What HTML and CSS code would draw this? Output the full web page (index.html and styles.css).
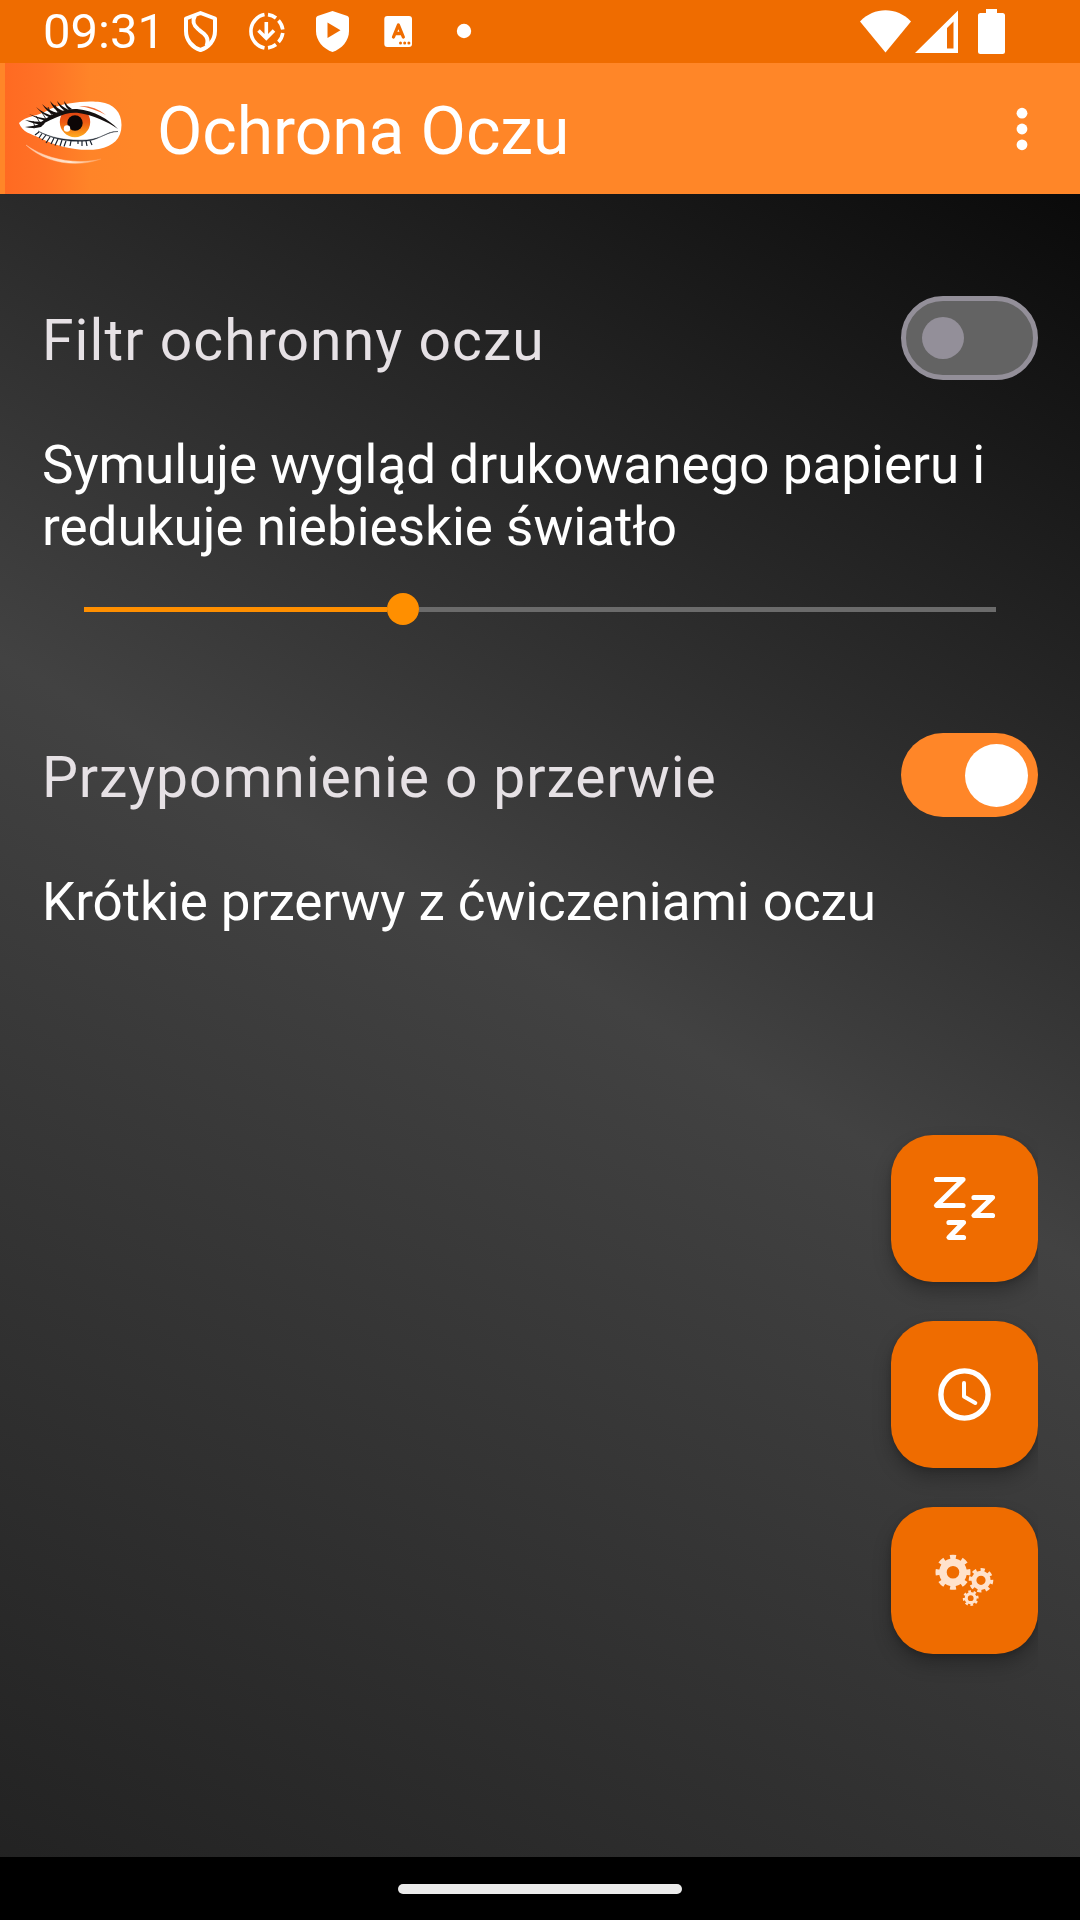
FILE: index.html
```html
<!DOCTYPE html>
<html lang="pl">
<head>
<meta charset="utf-8">
<title>Ochrona Oczu</title>
<link rel="stylesheet" href="styles.css">
</head>
<body>
<div class="screen">
  <header class="status-bar">
    <span class="clock">09:31</span>
    <svg class="status-left" width="300" height="63" viewBox="170 0 300 63" fill="none" stroke="#fff">
      <path d="M200.500 13L215 18.500V31C215 40.500 208.500 47.500 200.500 50C192.500 47.500 186 40.500 186 31V18.500Z" stroke-width="4" stroke-linejoin="round"/>
      <path d="M195 15.500C191.500 22 194 26 198.500 29.500C204 33.500 210 37 206.500 46" stroke-width="4"/>
      <path d="M264.500 14.600A17 17 0 0 0 264.500 47.900" stroke-width="3.600"/>
      <path d="M268 14.600A17 17 0 0 1 276 18M278.500 20.500A17 17 0 0 1 282.800 29.500M282.800 33A17 17 0 0 1 278.500 42M276 44.500A17 17 0 0 1 268 47.900" stroke-width="3.600"/>
      <path d="M266.300 22V36M258.500 30.500L266.300 38.200L274 30.500" stroke-width="3.600"/>
      <path d="M332.500 11L347.500 16Q349 16.800 349 18.500V31C349 41 341.500 49 332.500 52C323.500 49 316 41 316 31V18.500Q316 16.800 317.500 16Z" fill="#fff" stroke="none"/>
      <path d="M327.500 22.500V38L340.500 30.300Z" fill="#ef6c00" stroke="none"/>
      <rect x="384.300" y="16" width="27.700" height="31" rx="3" fill="#fff" stroke="none"/>
      <path d="M393.500 37L398.400 25L403.300 37M395.300 33.500H401.500" stroke="#ef6c00" stroke-width="3.300" stroke-linecap="round" stroke-linejoin="round"/>
      <g fill="#ef6c00" stroke="none"><circle cx="400.500" cy="43" r="1.500"/><circle cx="404.700" cy="43" r="1.500"/><circle cx="408.900" cy="43" r="1.500"/></g>
      <circle cx="464" cy="31" r="7.200" fill="#fff" stroke="none"/>
    </svg>
    <svg class="status-right" width="150" height="63" viewBox="858 0 150 63" fill="#fff">
      <path d="M860 21.500C874 6.500 897 6.500 911 21.500L885.500 52.500Z"/>
      <path fill-rule="evenodd" d="M915 53L958 10.500V53ZM947 28V48.500H953.500V21.500Z"/>
      <path d="M986 9H997V13H1002.500Q1005 13 1005 15.500V51.500Q1005 54 1002.500 54H980.500Q978 54 978 51.500V15.500Q978 13 980.500 13H986Z"/>
    </svg>
  </header>

  <div class="app-bar">
    <svg class="logo" width="131" height="131" viewBox="5 63 131 131">
      <defs>
        <linearGradient id="logoBg"><stop offset="0" stop-color="#ff6a22"/><stop offset=".3" stop-color="#ff7226"/><stop offset=".65" stop-color="#ff8428"/><stop offset="1" stop-color="#ff8628"/></linearGradient>
        <linearGradient id="iris" x1="0" y1="0" x2="0" y2="1"><stop offset="0" stop-color="#d83a12"/><stop offset=".5" stop-color="#ee5a12"/><stop offset="1" stop-color="#ffab1c"/></linearGradient>
        <linearGradient id="fold"><stop offset="0" stop-color="#ffc4a0"/><stop offset=".6" stop-color="#ffe6d0"/><stop offset="1" stop-color="#ff9d58"/></linearGradient>
        <clipPath id="lids"><path d="M38 128C49 117 62 110 76 111C92 112 106 121 118 130C107 131 101 139 88 141C68 143 51 138 38 128Z"/></clipPath>
      </defs>
      <rect x="5" y="63" width="131" height="131" fill="url(#logoBg)"/>
      <path d="M19 123C25 116 40 116 50 109C62 103 87 100 100 102C114 104 121.500 112 121.500 125C121.500 139 113 146 99 149C80 152 58 147 40 138C31 134 22 132 19 123Z" fill="#fff"/>
      <path d="M79 106Q94 105 106 115Q93 108 79 106Z" fill="#f26a30"/>
      <g clip-path="url(#lids)">
        <circle cx="75" cy="122" r="15.200" fill="url(#iris)"/>
        <circle cx="75" cy="123" r="7.700" fill="#0c0606"/>
        <circle cx="67" cy="128.500" r="3.200" fill="#fff"/>
      </g>
      <path d="M33 129C49 114 63 108.500 77 109C95 111 108 119 118 129C106 121 93 115 77 112.800C63 112 51 120 33 129Z" fill="#15100f"/>
      <path d="M38 131C51 138.500 66 142.500 87 141C101 139.500 106 131 118 131.500C108 131.500 102 138.500 87 140C66 141 50 137.500 38 131Z" fill="#18202c" stroke="#18202c" stroke-width=".4"/>
      <g fill="#15100f">
        <path d="M43 125Q33 124 25 120Q34 122 45 122Z"/>
        <path d="M47 121Q37 119 29 114Q38 118 50 119Z"/>
        <path d="M51 118Q43 115 36 107Q44 114 54 116Z"/>
        <path d="M55 116Q47 112 42 104Q49 111 58 113Z"/>
        <path d="M60 113Q53 109 50 101Q56 108 63 111Z"/>
        <path d="M65 111Q59 107 57 101Q62 107 68 109.500Z"/>
        <path d="M69 110Q65 107 64 101Q67 106 72 109Z"/>
        <path d="M41 127Q33 129 25 127Q34 126 45 123Z"/>
      </g>
      <path d="M35 127L33 121M40 123L36 116M46 119L41 111M52 116L48 107M58 113L55 105" stroke="#15100f" stroke-width=".8"/>
      <path d="M39 132L35 135M42 133.500L39 138M46 135L42 140M50 137L46 143M54 138L51 144M58 139L55 145.500M62 140L60 146M66 141L64 146.500M71 141L70 146M78 141L78 144M82 141L82 146M86 141L87 146M90 140.500L92 145" stroke="#18202c" stroke-width="1.200"/>
      <path d="M26 145C45 163 76 168 101 159C77 165 47 160 26 145Z" fill="url(#fold)" stroke="url(#fold)" stroke-width=".4"/>
    </svg>
    <h1 class="title">Ochrona Oczu</h1>
    <svg class="menu" width="12" height="44" viewBox="0 0 12 44" fill="#fff"><circle cx="6" cy="6.200" r="5.400"/><circle cx="6" cy="22" r="5.400"/><circle cx="6" cy="37.800" r="5.400"/></svg>
  </div>

  <main class="content">
    <section class="setting">
      <div class="setting-head"><h2 class="setting-name">Filtr ochronny oczu</h2><span class="switch"><span class="thumb"></span></span></div>
      <p class="description">Symuluje wygląd drukowanego papieru i redukuje niebieskie światło</p>
      <div class="slider"><span class="slider-fill"></span><span class="slider-thumb"></span><span class="slider-rest"></span></div>
    </section>
    <section class="setting reminder">
      <div class="setting-head"><h2 class="setting-name">Przypomnienie o przerwie</h2><span class="switch switch-on"><span class="thumb"></span></span></div>
      <p class="description">Krótkie przerwy z ćwiczeniami oczu</p>
    </section>
    <div class="actions">
      <button class="fab"><svg width="147" height="147" viewBox="0 0 147 147" fill="none" stroke="#fff" stroke-width="5.200" stroke-linecap="round" stroke-linejoin="round"><path d="M45.500 44.500H72L45.500 70.500H72M83 62.500H101.500L83 80.500H101.500M58 87.500H72.500L58 102.500H72.500"/></svg></button>
      <button class="fab"><svg width="147" height="147" viewBox="0 0 147 147" fill="none" stroke="#fff" stroke-linecap="round" stroke-linejoin="round"><circle cx="73.500" cy="73.500" r="23.600" stroke-width="5.400"/><path d="M73 62V75.500L84.300 82" stroke-width="4"/></svg></button>
      <button class="fab"><svg width="147" height="147" viewBox="0 0 147 147" fill="none" stroke="#ffe2cc">
        <circle cx="62" cy="65.300" r="10.100" stroke-width="7.600"/><circle cx="62" cy="65.300" r="15.200" stroke-width="4.600" pathLength="16" stroke-dasharray="1 1" stroke-dashoffset=".5"/>
        <circle cx="90" cy="73.300" r="7.100" stroke-width="5"/><circle cx="90" cy="73.300" r="10.600" stroke-width="3.400" pathLength="16" stroke-dasharray="1 1" stroke-dashoffset=".1"/>
        <circle cx="79.700" cy="91.200" r="4.500" stroke-width="3.200"/><circle cx="79.700" cy="91.200" r="6.700" stroke-width="2.400" pathLength="16" stroke-dasharray="1 1" stroke-dashoffset=".9"/>
      </svg></button>
    </div>
  </main>
  <footer class="nav-bar"><span class="handle"></span></footer>
</div>
</body>
</html>
```
FILE: styles.css
```css
* { box-sizing: border-box; margin: 0; padding: 0; }
body { font-family: Roboto, sans-serif; background: #000; }
svg { display: block; flex: none; }

.screen {
  width: 1080px; height: 1920px; display: flex; flex-direction: column; overflow: hidden;
  background: linear-gradient(209.36deg, #000 0%, #424242 50%, #212121 100%);
}

.status-bar { height: 63px; flex: none; display: flex; background: #ef6c00; color: #fff; padding-right: 72px; }
.clock { width: 170px; padding-left: 43px; font-size: 49px; line-height: 63px; white-space: nowrap; }
.status-left { overflow: visible; }
.status-right { margin-left: auto; }

.app-bar { height: 131px; flex: none; display: flex; align-items: center; background: #ff8628; color: #fff; padding: 0 52px 0 5px; }
.title { font-size: 66px; line-height: 78px; font-weight: 400; margin-left: 21px; padding-top: 6px; letter-spacing: -.1px; white-space: nowrap; }
.menu { margin-left: auto; }

.content { flex: 1; display: flex; flex-direction: column; padding: 102px 42px 0; }
.setting:first-child { height: 437px; }
.setting-head { height: 84px; display: flex; align-items: center; justify-content: space-between; }
.setting-name { font-size: 57px; line-height: 68px; font-weight: 400; letter-spacing: 1.07px; color: #e6e1e5; padding-top: 5px; white-space: nowrap; }
.description { margin-top: 54px; font-size: 53px; line-height: 62px; color: #fff; }
.reminder .setting-name { letter-spacing: .9px; }
.reminder .description { letter-spacing: -.06px; }

.switch { width: 137px; height: 84px; flex: none; display: flex; align-items: center; border-radius: 42px; border: 5px solid #938f99; background: #636363; padding-left: 16px; }
.thumb { width: 42px; height: 42px; border-radius: 50%; background: #938f99; }
.switch-on { border: 0; background: #ff8628; padding-left: 63.500px; }
.switch-on .thumb { width: 63px; height: 63px; background: #fff; }

.slider { display: flex; align-items: center; height: 32px; margin: 35px 42px 0; }
.slider-fill { width: 303px; height: 5px; background: #ff8f00; }
.slider-thumb { width: 32px; height: 32px; border-radius: 50%; background: #ff8f00; }
.slider-rest { flex: 1; height: 5px; background: #6b6b6b; }

.actions { align-self: flex-end; display: flex; flex-direction: column; gap: 39px; margin-top: 202px; clip-path: inset(-20px 0 -40px -30px); }
.fab { width: 147px; height: 147px; border: 0; border-radius: 42px; background: #ef6c00; box-shadow: 0 10px 18px rgba(0, 0, 0, .25), 0 2px 5px rgba(0, 0, 0, .15); }

.nav-bar { height: 63px; flex: none; display: flex; align-items: center; justify-content: center; background: #000; }
.handle { width: 284px; height: 10px; border-radius: 5px; background: #ebebeb; }
```
